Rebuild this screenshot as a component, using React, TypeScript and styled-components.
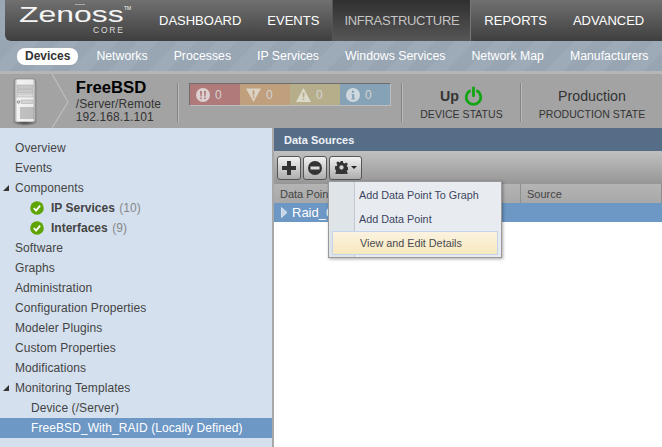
import React from 'react';
import styled, { createGlobalStyle } from 'styled-components';

const GlobalStyle = createGlobalStyle`
  html, body {
    margin: 0;
    padding: 0;
    width: 662px;
    height: 447px;
    overflow: hidden;
    font-family: "Liberation Sans", Arial, sans-serif;
    background: #fff;
  }
`;

const navItems = [
  { label: 'DASHBOARD' },
  { label: 'EVENTS' },
  { label: 'INFRASTRUCTURE', active: true },
  { label: 'REPORTS' },
  { label: 'ADVANCED' },
];

const subItems = ['Devices', 'Networks', 'Processes', 'IP Services', 'Windows Services', 'Network Map', 'Manufacturers'];

const events = [
  { color: '#b07a7a', glyph: 'crit' },
  { color: '#bf9f7c', glyph: 'err' },
  { color: '#b6ae8b', glyph: 'warn' },
  { color: '#86a2b6', glyph: 'info' },
];

const treeTop = ['Overview', 'Events'];
const treeBottom = ['Software', 'Graphs', 'Administration', 'Configuration Properties', 'Modeler Plugins', 'Custom Properties', 'Modifications'];

const EventIcon = ({ glyph }: { glyph: string }) => {
  if (glyph === 'crit') {
    return (
      <svg width="14" height="14" viewBox="0 0 14 14">
        <circle cx="7" cy="7" r="7" fill="#dcd0d0" />
        <path d="M4 3h2l-.4 5.500H4.400zM8 3h2l-.4 5.500H8.400z" fill="#b07a7a" />
        <rect x="4.200" y="9.500" width="1.600" height="1.600" fill="#b07a7a" />
        <rect x="8.200" y="9.500" width="1.600" height="1.600" fill="#b07a7a" />
      </svg>
    );
  }
  if (glyph === 'err') {
    return (
      <svg width="15" height="14" viewBox="0 0 15 14">
        <path d="M0 0.500h15L7.500 14z" fill="#dcd3c4" />
        <path d="M6.500 2.500h2l-.3 5h-1.400z" fill="#bf9f7c" />
        <rect x="6.700" y="8.500" width="1.600" height="1.600" fill="#bf9f7c" />
      </svg>
    );
  }
  if (glyph === 'warn') {
    return (
      <svg width="15" height="14" viewBox="0 0 15 14">
        <path d="M7.500 0L15 14H0z" fill="#dcd9ca" />
        <path d="M6.500 4.500h2l-.3 5h-1.400z" fill="#b6ae8b" />
        <rect x="6.700" y="10.500" width="1.600" height="1.600" fill="#b6ae8b" />
      </svg>
    );
  }
  return (
    <svg width="14" height="14" viewBox="0 0 14 14">
      <circle cx="7" cy="7" r="7" fill="#cfd8de" />
      <circle cx="7" cy="3.700" r="1.200" fill="#86a2b6" />
      <path d="M5.500 6h2.700v4.500h1V11.500H5.200v-1h1V7h-.7z" fill="#86a2b6" />
    </svg>
  );
};

const ServerIcon = () => (
  <svg width="26" height="48" viewBox="0 0 26 48">
    <defs>
      <linearGradient id="srv" x1="0" y1="0" x2="1" y2="0">
        <stop offset="0" stopColor="#8e8e8e" />
        <stop offset="0.15" stopColor="#f2f2f2" />
        <stop offset="0.85" stopColor="#ececec" />
        <stop offset="1" stopColor="#8a8a8a" />
      </linearGradient>
      <radialGradient id="srvShadow">
        <stop offset="0" stopColor="#333" />
        <stop offset="1" stopColor="#333" stopOpacity="0" />
      </radialGradient>
    </defs>
    <ellipse cx="13" cy="44" rx="13" ry="4" fill="url(#srvShadow)" />
    <path d="M2 4q0-3 3-3h16q3 0 3 3v38q0 2-2 2H4q-2 0-2-2z" fill="url(#srv)" stroke="#777" strokeWidth="0.6" />
    <rect x="5" y="7" width="16" height="3.500" fill="#c8c8c8" stroke="#999" strokeWidth="0.4" />
    <rect x="5" y="11.500" width="16" height="3.500" fill="#c8c8c8" stroke="#999" strokeWidth="0.4" />
    <rect x="5" y="16" width="16" height="3" fill="#dcdcdc" stroke="#999" strokeWidth="0.4" />
    <rect x="9" y="22" width="12" height="3.500" fill="#d4d4d4" stroke="#999" strokeWidth="0.4" />
    <circle cx="6.500" cy="24" r="1.300" fill="#ccc" stroke="#666" strokeWidth="0.5" />
    <path d="M9 29v12M11 29v12M13 29v12M15 29v12M17 29v12M19 29v12M21 29v12" stroke="#777" strokeWidth="0.8" />
  </svg>
);

const CheckBadge = () => (
  <svg width="14" height="14" viewBox="0 0 14 14">
    <circle cx="7" cy="7" r="6.800" fill="#5ea404" />
    <path d="M3.800 7.200l2.300 2.400 4-5" fill="none" stroke="#fff" strokeWidth="1.800" />
  </svg>
);

const PowerIcon = () => (
  <svg width="19" height="20" viewBox="0 0 19 20">
    <path d="M5.600 5a7.300 7.300 0 1 0 7.800 0" fill="none" stroke="#12a512" strokeWidth="2.800" strokeLinecap="round" />
    <path d="M9.500 1.800v8" fill="none" stroke="#12a512" strokeWidth="2.800" strokeLinecap="round" />
  </svg>
);

const GearIcon = () => (
  <svg width="13" height="13" viewBox="0 0 24 24">
    <path
      d="M9.500 0h5l.7 3.600 2.500 1 3-2 3 3-2 3 1 2.500 3.300.7v4.400l-3.300.7-1 2.500 2 3-3 3-3-2-2.500 1-.7 3.500h-5l-.7-3.500-2.500-1-3 2-3-3 2-3-1-2.500L0 14.200V9.800l3.300-.7 1-2.500-2-3 3-3 3 2 2.500-1zM12 8a4 4 0 1 0 0 8 4 4 0 0 0 0-8z"
      fill="#333"
      fillRule="evenodd"
    />
  </svg>
);

const Page = styled.div`
  width: 662px;
  height: 447px;
  display: flex;
  flex-direction: column;
  overflow: hidden;
  background: #9aa8b6;
`;

const TopBar = styled.header`
  height: 41px;
  margin-left: 5px;
  display: flex;
  overflow: hidden;
  border-bottom-left-radius: 6px;
  background: linear-gradient(#707070, #3f3f3f);
`;

const LogoCorner = styled.div`
  position: relative;
  width: 141px;
  flex: none;
  padding-left: 14px;
  box-sizing: border-box;
  color: #f4f4f4;
`;

const LogoWord = styled.div`
  font-size: 22px;
  line-height: 22px;
  padding-top: 4px;
  transform: scaleX(1.45);
  transform-origin: left center;
`;

const LogoMark = styled.span`
  position: absolute;
  left: 70px;
  top: 4px;
  width: 10px;
  height: 1px;
  background: #aaa;
`;

const LogoTrade = styled.span`
  position: absolute;
  left: 119px;
  top: 5px;
  font-size: 5px;
  line-height: 6px;
`;

const LogoCore = styled.div`
  font-size: 8.5px;
  letter-spacing: 1.8px;
  line-height: 8px;
  padding-left: 74px;
  color: #dedede;
`;

const NavItem = styled.div<{ $active?: boolean }>`
  display: flex;
  align-items: center;
  padding: 0 ${(p) => (p.$active ? '11px' : '13px')};
  font-size: 13px;
  letter-spacing: ${(p) => (p.$active ? '-0.3px' : '0')};
  color: ${(p) => (p.$active ? '#c4c4c4' : '#fff')};
  background: ${(p) => (p.$active ? 'linear-gradient(#303030, #565656)' : 'none')};
  border-left: ${(p) => (p.$active ? '1px solid #555' : 'none')};
  border-right: ${(p) => (p.$active ? '1px solid #777' : 'none')};
  white-space: nowrap;
`;

const SubBar = styled.nav`
  height: 30px;
  display: flex;
  align-items: center;
  padding-left: 17px;
  gap: 26px;
  background: repeating-linear-gradient(135deg, #98a6b4 0 14px, #9dabb9 14px 28px);
`;

const SubItem = styled.div<{ $active?: boolean }>`
  font-size: ${(p) => (p.$active ? '12px' : '12.3px')};
  line-height: 17px;
  white-space: nowrap;
  color: ${(p) => (p.$active ? '#333' : '#fff')};
  font-weight: ${(p) => (p.$active ? 700 : 400)};
  background: ${(p) => (p.$active ? '#fff' : 'none')};
  border-radius: 8px;
  padding: ${(p) => (p.$active ? '0 8px' : '0')};
  margin-right: ${(p) => (p.$active ? '-8px' : '0')};
`;

const DeviceBar = styled.div`
  height: 57px;
  display: flex;
  background: #a3a3a3;
  border-top: 3px solid #b5b5b5;
  box-sizing: border-box;
  align-items: center;
`;

const ServerSlot = styled.div`
  width: 52px;
  padding-left: 12px;
  margin-top: 2px;
  box-sizing: border-box;
  display: flex;
`;

const Chevron = styled.svg`
  width: 17px;
  height: 54px;
  flex: none;
`;

const DeviceInfo = styled.div`
  width: 109px;
  padding-left: 7px;
  margin-top: -1px;
  box-sizing: border-box;
  color: #333;
  font-size: 12px;
  letter-spacing: 0.1px;
  line-height: 13px;
`;

const DeviceName = styled.div`
  font-size: 16.7px;
  line-height: 21px;
  letter-spacing: 0;
  font-weight: 700;
  color: #000;
`;

const Divider = styled.div`
  width: 1px;
  height: 39px;
  margin-top: 2px;
  flex: none;
  background: #858585;
  border-right: 1px solid #b8b8b8;
`;

const EventRail = styled.div`
  display: flex;
  height: 21px;
  margin: -13px 10px 0;
  border: 1px solid #bdbdbd;
  border-top-color: #6e6e6e;
  border-left-color: #6e6e6e;
`;

const EventCell = styled.div<{ $color: string }>`
  width: 50px;
  display: flex;
  align-items: center;
  gap: 5px;
  padding-left: 6px;
  box-sizing: border-box;
  background: ${(p) => p.$color};
  color: #d4d4d4;
  font-size: 12px;
`;

const StatusBlock = styled.div<{ $width: number }>`
  width: ${(p) => p.$width}px;
  flex: none;
  text-align: center;
  color: #333;
  margin-top: 2px;
`;

const StatusValue = styled.div<{ $bold?: boolean }>`
  display: flex;
  align-items: center;
  justify-content: center;
  gap: 5px;
  height: 22px;
  padding-top: 2px;
  font-size: 14.2px;
  font-weight: ${(p) => (p.$bold ? 700 : 400)};
`;

const StatusLabel = styled.div`
  font-size: 10.5px;
  letter-spacing: 0.05px;
  line-height: 14px;
  white-space: nowrap;
`;

const Body = styled.div`
  flex: 1;
  min-height: 0;
  display: flex;
`;

const Sidebar = styled.aside`
  width: 272px;
  flex: none;
  background: #d4e0ee;
  padding-top: 10px;
  box-sizing: border-box;
`;

const TreeRow = styled.div<{ $selected?: boolean; $indent?: number }>`
  position: relative;
  height: 20px;
  display: flex;
  align-items: center;
  gap: 7px;
  padding-left: ${(p) => p.$indent ?? 15}px;
  font-size: 12px;
  letter-spacing: 0.08px;
  white-space: nowrap;
  color: ${(p) => (p.$selected ? '#fff' : '#444')};
  background: ${(p) => (p.$selected ? '#6d97c5' : 'none')};
`;

const Arrow = styled.span`
  position: absolute;
  left: 3px;
  top: 7px;
  width: 0;
  height: 0;
  border-left: 6px solid transparent;
  border-bottom: 6px solid #333;
`;

const Count = styled.span`
  color: #888;
  margin-left: 1px;
`;

const Bold = styled.b`
  color: #444;
  letter-spacing: 0;
`;

const Main = styled.main`
  flex: 1;
  min-width: 0;
  position: relative;
  border-left: 2px solid #a8a8a8;
  display: flex;
  flex-direction: column;
  background: #fff;
`;

const PanelTitle = styled.div`
  height: 23px;
  display: flex;
  align-items: center;
  padding-left: 10px;
  background: #566d88;
  color: #eef2f6;
  font-size: 11px;
  font-weight: 700;
`;

const Toolbar = styled.div`
  height: 33px;
  display: flex;
  align-items: center;
  gap: 2px;
  padding-left: 3px;
  box-sizing: border-box;
  background: linear-gradient(#c0c0c0, #969696);
`;

const ToolButton = styled.button<{ $width: number }>`
  width: ${(p) => p.$width}px;
  height: 24px;
  padding: 0;
  display: flex;
  align-items: center;
  justify-content: center;
  gap: 3px;
  border: 1px solid #555;
  border-radius: 3px;
  background: linear-gradient(#f2f2f2, #adadad);
`;

const Caret = styled.span`
  width: 0;
  height: 0;
  border: 3px solid transparent;
  border-top: 3px solid #222;
  border-bottom: 0;
`;

const GridHead = styled.div`
  height: 19px;
  display: flex;
  font-size: 11px;
  color: #444;
  background: linear-gradient(#b4b4b4, #a8a8a8);
`;

const HeadCell = styled.div<{ $width?: number }>`
  width: ${(p) => (p.$width ? `${p.$width}px` : 'auto')};
  flex: ${(p) => (p.$width ? 'none' : 1)};
  box-sizing: border-box;
  padding-left: 6px;
  display: flex;
  align-items: center;
  border-right: 1px solid #8f8f8f;
`;

const GridRow = styled.div`
  height: 19px;
  display: flex;
  align-items: center;
  gap: 4px;
  padding-left: 7px;
  background: #6d97c5;
  color: #fff;
  font-size: 13px;
`;

const Menu = styled.div`
  position: absolute;
  left: 54px;
  top: 53px;
  width: 174px;
  height: 77px;
  padding: 1px 3px;
  box-sizing: border-box;
  background: linear-gradient(90deg, #dfe4e9 25px, #c4c9cf 25px, #c4c9cf 26px, #e8ecf0 26px);
  border: 1px solid #9a9a9a;
  box-shadow: 1px 1px 3px rgba(0, 0, 0, 0.35);
`;

const MenuItem = styled.div<{ $hover?: boolean }>`
  height: 24px;
  line-height: 24px;
  font-size: 10.8px;
  color: #3c4660;
  padding-left: 27px;
  box-sizing: border-box;
  white-space: nowrap;
  ${(p) =>
    p.$hover &&
    `
    color: #4a4a50;
    background: linear-gradient(#faf3e0, #f7e8bd);
    border: 1px solid #c3d5ea;
    line-height: 22px;
  `}
`;

export default function App() {
  return (
    <Page>
      <GlobalStyle />
      <TopBar>
        <LogoCorner>
          <LogoWord>Zenoss</LogoWord>
          <LogoMark />
          <LogoTrade>TM</LogoTrade>
          <LogoCore>CORE</LogoCore>
        </LogoCorner>
        {navItems.map((n) => (
          <NavItem key={n.label} $active={n.active}>
            {n.label}
          </NavItem>
        ))}
      </TopBar>
      <SubBar>
        {subItems.map((s, i) => (
          <SubItem key={s} $active={i === 0}>
            {s}
          </SubItem>
        ))}
      </SubBar>
      <DeviceBar>
        <ServerSlot>
          <ServerIcon />
        </ServerSlot>
        <Chevron viewBox="0 0 17 54">
          <path d="M0 0l16 28L0 54" fill="none" stroke="#bdbdbd" strokeWidth="1.200" />
        </Chevron>
        <DeviceInfo>
          <DeviceName>FreeBSD</DeviceName>
          <div>/Server/Remote</div>
          <div>192.168.1.101</div>
        </DeviceInfo>
        <Divider />
        <EventRail>
          {events.map((e) => (
            <EventCell key={e.glyph} $color={e.color}>
              <EventIcon glyph={e.glyph} />0
            </EventCell>
          ))}
        </EventRail>
        <Divider />
        <StatusBlock $width={117}>
          <StatusValue $bold>
            Up <PowerIcon />
          </StatusValue>
          <StatusLabel>DEVICE STATUS</StatusLabel>
        </StatusBlock>
        <Divider />
        <StatusBlock $width={140}>
          <StatusValue>Production</StatusValue>
          <StatusLabel>PRODUCTION STATE</StatusLabel>
        </StatusBlock>
      </DeviceBar>
      <Body>
        <Sidebar>
          {treeTop.map((t) => (
            <TreeRow key={t}>{t}</TreeRow>
          ))}
          <TreeRow>
            <Arrow />
            Components
          </TreeRow>
          <TreeRow $indent={30}>
            <CheckBadge />
            <span>
              <Bold>IP Services</Bold> <Count>(10)</Count>
            </span>
          </TreeRow>
          <TreeRow $indent={30}>
            <CheckBadge />
            <span>
              <Bold>Interfaces</Bold> <Count>(9)</Count>
            </span>
          </TreeRow>
          {treeBottom.map((t) => (
            <TreeRow key={t}>{t}</TreeRow>
          ))}
          <TreeRow>
            <Arrow />
            Monitoring Templates
          </TreeRow>
          <TreeRow $indent={31}>Device (/Server)</TreeRow>
          <TreeRow $indent={31} $selected>
            FreeBSD_With_RAID (Locally Defined)
          </TreeRow>
        </Sidebar>
        <Main>
          <PanelTitle>Data Sources</PanelTitle>
          <Toolbar>
            <ToolButton $width={24}>
              <svg width="14" height="14" viewBox="0 0 14 14">
                <path d="M5 0h4v5h5v4H9v5H5V9H0V5h5z" fill="#333" />
              </svg>
            </ToolButton>
            <ToolButton $width={24}>
              <svg width="14" height="14" viewBox="0 0 14 14">
                <circle cx="7" cy="7" r="7" fill="#333" />
                <rect x="2.500" y="5.500" width="9" height="3" fill="#ddd" />
              </svg>
            </ToolButton>
            <ToolButton $width={33}>
              <GearIcon />
              <Caret />
            </ToolButton>
          </Toolbar>
          <GridHead>
            <HeadCell $width={247}>Data Point</HeadCell>
            <HeadCell>Source</HeadCell>
          </GridHead>
          <GridRow>
            <svg width="7" height="11" viewBox="0 0 7 11">
              <path d="M0.500 0.500L6 5.500 0.500 10.500z" fill="#c6d6e8" stroke="#e4ecf4" strokeWidth="0.800" />
            </svg>
            Raid_0
          </GridRow>
          <Menu>
            <MenuItem>Add Data Point To Graph</MenuItem>
            <MenuItem>Add Data Point</MenuItem>
            <MenuItem $hover>View and Edit Details</MenuItem>
          </Menu>
        </Main>
      </Body>
    </Page>
  );
}
